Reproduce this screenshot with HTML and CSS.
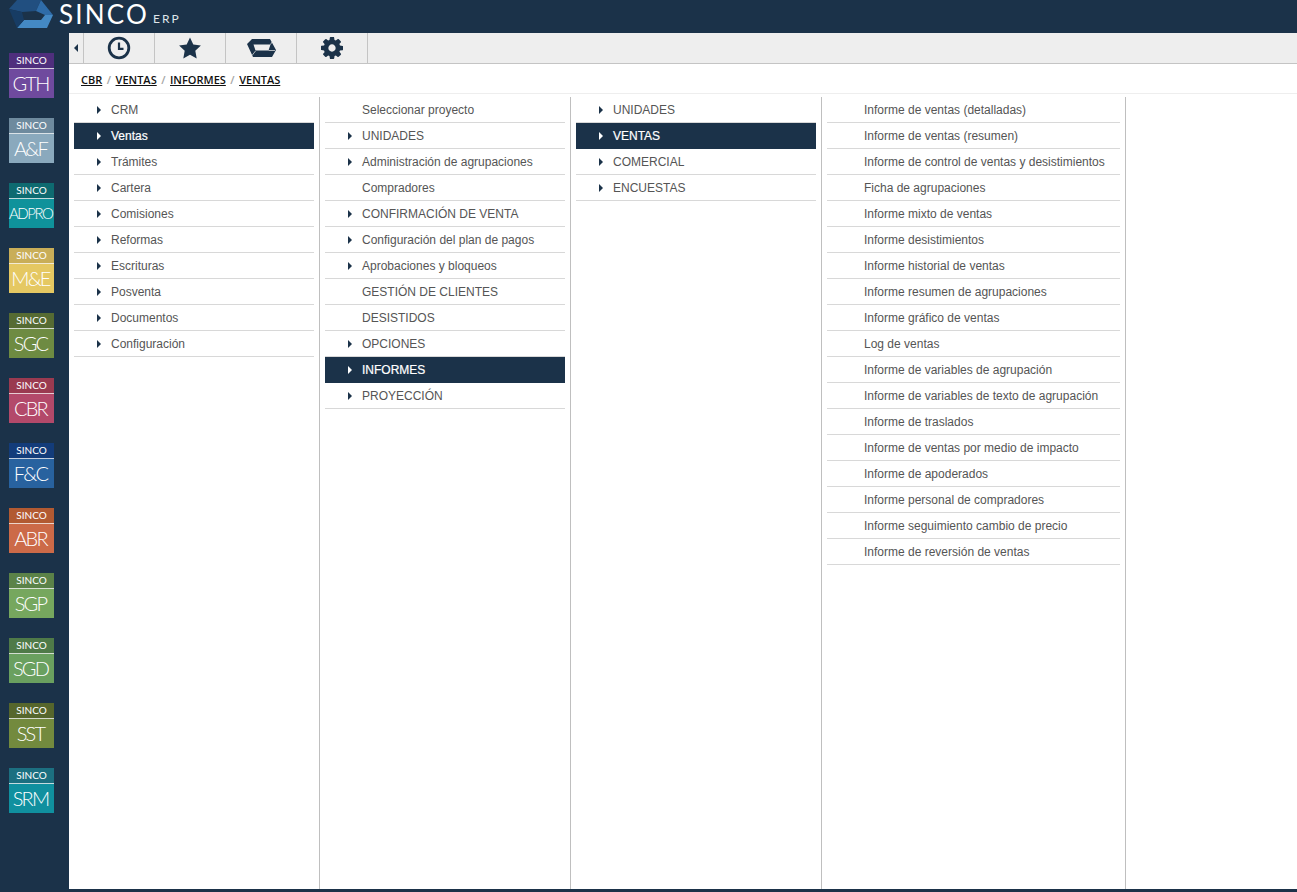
FILE: index.html
```html
<!DOCTYPE html>
<html lang="es">
<head>
<meta charset="utf-8">
<title>SINCO ERP</title>
<link rel="stylesheet" href="styles.css">
</head>
<body>
<header class="topbar">
  <svg class="logo" viewBox="0 0 46 28" width="46" height="28" aria-hidden="true">
    <path d="M1 9 L9 0 H33 L28 11 L14 12 Z" fill="#214f80"/>
    <path d="M33 0 L45 15 H37 L28 11 Z" fill="#2f6ca8"/>
    <path d="M9 28 L16 20 H33 L37 15 H45 L39 28 Z" fill="#4489c4"/>
    <path d="M1 9 L14 12 L16 20 L9 28 Z" fill="#173c64"/>
  </svg>
  <span class="brand">SINCO</span><span class="erp">ERP</span>
</header>
<div class="main">
  <nav class="apps">
    <a class="app gth"><span class="app-top">SINCO</span><span class="app-name">GTH</span></a>
    <a class="app af"><span class="app-top">SINCO</span><span class="app-name">A&amp;F</span></a>
    <a class="app adpro"><span class="app-top">SINCO</span><span class="app-name small">ADPRO</span></a>
    <a class="app me"><span class="app-top">SINCO</span><span class="app-name">M&amp;E</span></a>
    <a class="app sgc"><span class="app-top">SINCO</span><span class="app-name">SGC</span></a>
    <a class="app cbr"><span class="app-top">SINCO</span><span class="app-name">CBR</span></a>
    <a class="app fc"><span class="app-top">SINCO</span><span class="app-name">F&amp;C</span></a>
    <a class="app abr"><span class="app-top">SINCO</span><span class="app-name">ABR</span></a>
    <a class="app sgp"><span class="app-top">SINCO</span><span class="app-name">SGP</span></a>
    <a class="app sgd"><span class="app-top">SINCO</span><span class="app-name">SGD</span></a>
    <a class="app sst"><span class="app-top">SINCO</span><span class="app-name">SST</span></a>
    <a class="app srm"><span class="app-top">SINCO</span><span class="app-name">SRM</span></a>
  </nav>
  <div class="content">
    <div class="toolbar">
      <div class="collapse"><i class="tri tri-left"></i></div>
      <div class="tool"><svg viewBox="0 0 24 24" width="24" height="24"><circle cx="12" cy="12" r="9.800" fill="none" stroke="#1b3249" stroke-width="2.800"/><path d="M12 6.500v6.300h4.500" fill="none" stroke="#1b3249" stroke-width="2.200"/></svg></div>
      <div class="tool"><svg viewBox="0 0 24 24" width="24" height="24"><path d="M12 1.500l3.300 7 7.600 1-5.600 5.300 1.400 7.600-6.700-3.700-6.700 3.700 1.400-7.600L1.100 9.500l7.600-1z" fill="#1b3249"/></svg></div>
      <div class="tool"><svg viewBox="0 0 29 18" width="29" height="18"><path fill-rule="evenodd" d="M0 5 L5 0 H23 L29 11 L25 18 H6 Z M6.500 5.500 L8.500 11.500 H21.500 L23.500 5.500 Z" fill="#1b3249"/><path d="M5 16.500 L8.500 12 M23.500 5.500 L25 3 M21.500 11.500 H28" fill="none" stroke="#eeeeee" stroke-width=".7"/></svg></div>
      <div class="tool"><svg viewBox="128 128 1536 1536" width="22" height="22"><path d="M1152 896q0-106-75-181t-181-75-181 75-75 181 75 181 181 75 181-75 75-181zm512-109v222q0 12-8 23t-20 13l-185 28q-19 54-39 91 35 50 107 138 10 12 10 25t-9 23q-27 37-99 108t-94 71q-12 0-26-9l-138-108q-44 23-91 38-16 136-29 186-7 28-36 28h-222q-14 0-24.500-8.500t-11.500-21.500l-28-184q-49-16-90-37l-141 107q-10 9-25 9-14 0-25-11-126-114-165-168-7-10-7-23 0-12 8-23 15-21 51-66.500t54-70.500q-27-50-41-99l-183-27q-13-2-21-12.500t-8-23.500v-222q0-12 8-23t19-13l186-28q14-46 39-92-40-57-107-138-10-12-10-24 0-10 9-23 26-36 98.500-107.500t94.500-71.500q13 0 26 10l138 107q44-23 91-38 16-136 29-186 7-28 36-28h222q14 0 24.500 8.500t11.500 21.500l28 184q49 16 90 37l142-107q9-9 24-9 13 0 25 10 129 119 165 170 7 8 7 22 0 12-8 23-15 21-51 66.500t-54 70.500q26 50 41 98l183 28q13 2 21 12.500t8 23.500z" fill="#1b3249"/></svg></div>
    </div>
    <div class="crumbs"><a>CBR</a><span>/</span><a>VENTAS</a><span>/</span><a>INFORMES</a><span>/</span><a>VENTAS</a></div>
    <div class="columns">
      <ul class="col c1">
        <li class="arrow">CRM</li>
        <li class="arrow on">Ventas</li>
        <li class="arrow">Trámites</li>
        <li class="arrow">Cartera</li>
        <li class="arrow">Comisiones</li>
        <li class="arrow">Reformas</li>
        <li class="arrow">Escrituras</li>
        <li class="arrow">Posventa</li>
        <li class="arrow">Documentos</li>
        <li class="arrow">Configuración</li>
      </ul>
      <ul class="col c2">
        <li>Seleccionar proyecto</li>
        <li class="arrow">UNIDADES</li>
        <li class="arrow">Administración de agrupaciones</li>
        <li>Compradores</li>
        <li class="arrow">CONFIRMACIÓN DE VENTA</li>
        <li class="arrow">Configuración del plan de pagos</li>
        <li class="arrow">Aprobaciones y bloqueos</li>
        <li>GESTIÓN DE CLIENTES</li>
        <li>DESISTIDOS</li>
        <li class="arrow">OPCIONES</li>
        <li class="arrow on">INFORMES</li>
        <li class="arrow">PROYECCIÓN</li>
      </ul>
      <ul class="col c3">
        <li class="arrow">UNIDADES</li>
        <li class="arrow on">VENTAS</li>
        <li class="arrow">COMERCIAL</li>
        <li class="arrow">ENCUESTAS</li>
      </ul>
      <ul class="col c4">
        <li>Informe de ventas (detalladas)</li>
        <li>Informe de ventas (resumen)</li>
        <li>Informe de control de ventas y desistimientos</li>
        <li>Ficha de agrupaciones</li>
        <li>Informe mixto de ventas</li>
        <li>Informe desistimientos</li>
        <li>Informe historial de ventas</li>
        <li>Informe resumen de agrupaciones</li>
        <li>Informe gráfico de ventas</li>
        <li>Log de ventas</li>
        <li>Informe de variables de agrupación</li>
        <li>Informe de variables de texto de agrupación</li>
        <li>Informe de traslados</li>
        <li>Informe de ventas por medio de impacto</li>
        <li>Informe de apoderados</li>
        <li>Informe personal de compradores</li>
        <li>Informe seguimiento cambio de precio</li>
        <li>Informe de reversión de ventas</li>
      </ul>
    </div>
  </div>
</div>
</body>
</html>
```
FILE: styles.css
```css
* { box-sizing: border-box; }
html, body { margin: 0; height: 100%; }
body { width: 1297px; height: 892px; overflow: hidden; background: #1b3249; font-family: "Liberation Sans", Arial, sans-serif; display: flex; flex-direction: column; }
.topbar { height: 33px; flex: none; display: flex; align-items: flex-start; padding-left: 8px; background: #1b3249; color: #fff; }
.logo { flex: none; }
.brand { font-family: Lato, "Liberation Sans", sans-serif; font-size: 26px; font-weight: 400; letter-spacing: 2.200px; line-height: 28px; margin-left: 5px; }
.erp { font-family: Lato, "Liberation Sans", sans-serif; font-size: 12px; letter-spacing: 2px; margin: 12px 0 0 4px; line-height: 14px; color: #dfe5ea; }
.main { flex: 1; display: flex; min-height: 0; }
.apps { width: 69px; flex: none; padding: 20px 0 0 9px; display: flex; flex-direction: column; gap: 20px; }
.app { width: 45px; height: 45px; display: flex; flex-direction: column; color: #fff; font-family: Lato, "Liberation Sans", sans-serif; }
.app-top { height: 16px; font-size: 10px; line-height: 15px; text-align: center; border-bottom: 1px solid rgba(255,255,255,.75); flex: none; }
.app-name { flex: 1; font-size: 20px; line-height: 28px; text-align: center; font-weight: 300; letter-spacing: -1.800px; white-space: nowrap; padding-right: 2px; }
.app-name.small { font-size: 15px; letter-spacing: -1.500px; font-weight: 300; }
.gth { background: #6f4a9e; } .gth .app-top { background: #4f2f7d; }
.af { background: #8aa9bd; } .af .app-top { background: #6e8a9e; }
.adpro { background: #0f929b; } .adpro .app-top { background: #0e6a70; }
.me { background: #e5c862; } .me .app-top { background: #c9ae58; }
.sgc { background: #6e8b42; } .sgc .app-top { background: #566b33; }
.cbr { background: #b3496a; } .cbr .app-top { background: #9a3a50; }
.fc { background: #28629f; } .fc .app-top { background: #133c7a; }
.abr { background: #cc6a48; } .abr .app-top { background: #b25a32; }
.sgp { background: #76a75e; } .sgp .app-top { background: #5b8248; }
.sgd { background: #6aa05f; } .sgd .app-top { background: #4f7a48; }
.sst { background: #738a3e; } .sst .app-top { background: #56662c; }
.srm { background: #10909f; } .srm .app-top { background: #1c6f80; }
.content { flex: 1; min-width: 0; background: #fff; margin-bottom: 3px; display: flex; flex-direction: column; }
.toolbar { height: 31px; flex: none; display: flex; background: #eeeeee; border-bottom: 1px solid #c4c4c4; }
.collapse { width: 15px; border-right: 1px solid #c4c4c4; display: flex; align-items: center; justify-content: center; }
.tool { width: 71px; border-right: 1px solid #c4c4c4; display: flex; align-items: center; justify-content: center; }
.tri { display: block; width: 0; height: 0; border-style: solid; }
.tri-left { border-width: 4px 4px 4px 0; border-color: transparent #1b3249 transparent transparent; }
.crumbs { height: 30px; flex: none; padding-left: 12px; font-family: "Open Sans", "Liberation Sans", sans-serif; font-size: 11px; line-height: 32px; font-weight: 600; border-bottom: 1px solid #eeeeee; color: #a5a5a5; white-space: nowrap; }
.crumbs a { color: #111; text-decoration: underline; }
.crumbs span { margin: 0 4.500px; }
.columns { flex: 1; display: flex; min-height: 0; padding-top: 3px; }
.col { list-style: none; margin: 0; padding: 0 5px; border-right: 1px solid #bfbfbf; flex: none; }
.c1, .c2, .c3 { width: 251px; }
.c4 { width: 304px; }
.col li { height: 26px; padding-left: 37px; font-size: 12px; line-height: 27px; color: #555; border-bottom: 1px solid #d8d8d8; position: relative; white-space: nowrap; }
.arrow::before { content: ""; position: absolute; left: 23px; top: 9px; border-style: solid; border-width: 4px 0 4px 4.500px; border-color: transparent transparent transparent #1b3249; }
.col li.on { background: #1b3249; color: #fff; border-bottom-color: #1b3249; -webkit-text-stroke: .2px #fff; }
.col li.on::before { border-left-color: #fff; }
```
